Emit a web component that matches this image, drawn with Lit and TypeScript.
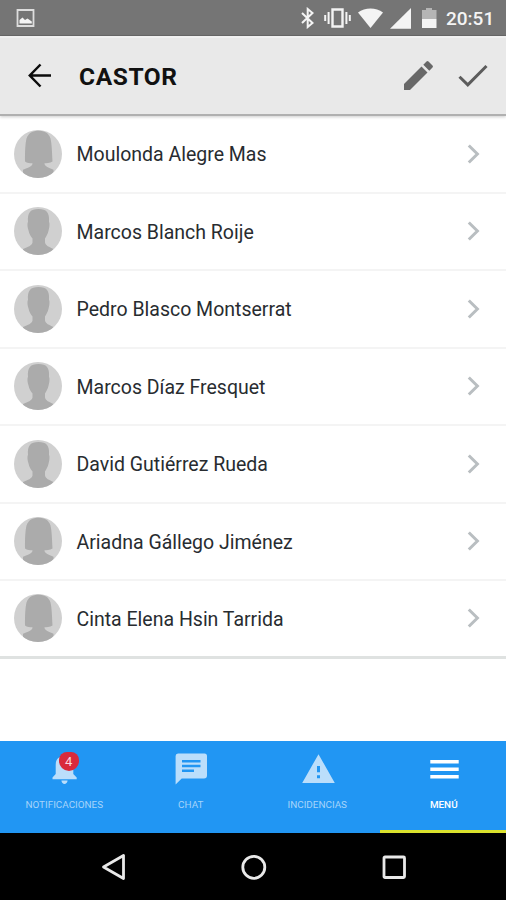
import { LitElement, html, css, svg } from "lit";
import { customElement, property } from "lit/decorators.js";
import { classMap } from "lit/directives/class-map.js";

interface Student {
  name: string;
  kind: "woman" | "man";
}

const students: Student[] = [
  { name: "Moulonda Alegre Mas", kind: "woman" },
  { name: "Marcos Blanch Roije", kind: "man" },
  { name: "Pedro Blasco Montserrat", kind: "man" },
  { name: "Marcos Díaz Fresquet", kind: "man" },
  { name: "David Gutiérrez Rueda", kind: "man" },
  { name: "Ariadna Gállego Jiménez", kind: "woman" },
  { name: "Cinta Elena Hsin Tarrida", kind: "woman" },
];

@customElement("student-avatar")
export class StudentAvatar extends LitElement {
  @property() kind: "woman" | "man" = "woman";

  static styles = css`
    :host { display: block; width: 48px; height: 48px; border-radius: 50%; overflow: hidden; background: #d0d0d0; }
    .figure { display: block; fill: #ababab; }
  `;

  render() {
    const woman = svg`<path d="M11 31.500C11 22 11.200 14 12.500 8.500C14.500 3 18.500 .8 24.500 .8S34.500 3 36.500 8.500C37.800 14 38 22 38.500 31.500C36 33 32 33.300 30.500 33.300C30.500 36 33 37 39.500 39.800V48H9V39.800C16 37 18.500 36 18.500 33.300C16 33.300 13 33 11 31.500Z"/>`;
    const man = svg`<path d="M14 15C13.200 5.500 16.500 2 24.500 2S35.800 5.500 35 15C35.800 16 35.600 20 34.700 23C34 27 32 29.500 31 31.500V35.500C31.500 38.500 35 40 39.500 42V48H9V42C14 40 18 38.500 18.500 35.500V31.500C17 29.500 15 27 14.400 23C13.400 20 13.200 16 14 15Z"/>`;
    return html`<svg class="figure" width="48" height="48" viewBox="0 0 48 48">${this.kind === "woman" ? woman : man}</svg>`;
  }
}

@customElement("student-row")
export class StudentRow extends LitElement {
  @property({ attribute: false }) student!: Student;

  static styles = css`
    :host { display: flex; align-items: center; box-sizing: border-box; padding: 0 25px 0 14px; border-bottom: 2px solid #f4f4f4; }
    :host(:last-child) { border-bottom: 3px solid #dfe2e1; }
    .name { flex: 1; margin-left: 14.500px; font-size: 19.500px; line-height: 24px; color: #282c30; white-space: nowrap; padding-top: 3px; }
    .chevron { display: block; fill: none; stroke: #b9bec1; stroke-width: 3; }
  `;

  render() {
    return html`
      <student-avatar .kind=${this.student.kind}></student-avatar>
      <span class="name">${this.student.name}</span>
      <svg class="chevron" width="15" height="22" viewBox="0 0 15 22"><path d="M2.800 2.500L11.400 11L2.800 19.500"/></svg>
    `;
  }
}

const tabs = [
  {
    label: "NOTIFICACIONES", active: false, badge: "4",
    icon: svg`<path d="M3.500 27.300V25.500L6.700 22V13C6.700 7.500 9.500 5 13.500 4V2.500C13.500 .5 17.500 .5 17.500 2.500V4C21.500 5 24.300 7.500 24.300 13V22L27.700 25.500V27.300ZM12.400 28.500H18.600C18.200 33 12.800 33 12.400 28.500Z"/>`,
  },
  {
    label: "CHAT", active: false, badge: "",
    icon: svg`<path fill-rule="evenodd" d="M3 1.500H29.500Q32 1.500 32 4V23.500Q32 26.500 29 26.500H6.700L.6 32.600V4Q.6 1.500 3 1.500ZM7 8V10.400H25.500V8ZM7 12.800V15.200H25.500V12.800ZM7 17.600V20H19V17.600Z"/>`,
  },
  {
    label: "INCIDENCIAS", active: false, badge: "",
    icon: svg`<path fill-rule="evenodd" d="M16.500 2.200L32.800 31H.2ZM15 14V20.200H18V14ZM15 23.200V26.200H18V23.200Z"/>`,
  },
  {
    label: "MENÚ", active: true, badge: "",
    icon: svg`<path d="M2.300 8H30.700V11.500H2.300ZM2.300 15.500H30.700V19H2.300ZM2.300 23H30.700V26.500H2.300Z"/>`,
  },
];

@customElement("app-root")
export class AppRoot extends LitElement {
  static styles = css`
    :host { display: flex; flex-direction: column; width: 506px; height: 900px; overflow: hidden; background: #fff; font-family: Roboto, "Noto Sans", sans-serif; }
    svg { display: block; flex: none; }
    .status { flex: none; display: flex; align-items: center; height: 36px; box-sizing: border-box; padding: 0 12px 0 16px; background: #757575; border-bottom: 1px solid #696969; color: #f4f4f4; fill: #f4f4f4; }
    .picture { margin-right: auto; }
    .clock { font-size: 19px; font-weight: 500; line-height: 24px; width: 48px; margin-left: 9px; white-space: nowrap; padding-top: 2px; }
    .header { flex: none; display: flex; align-items: center; height: 80px; box-sizing: border-box; padding: 0 18px 0 27px; background: #e9e9e9; border-top: 2px solid #f0f0f0; border-bottom: 2px solid #b0b0b0; box-shadow: 0 1px 3px #0003; z-index: 1; }
    .back { fill: none; stroke: #0c0c0c; stroke-width: 2.500; }
    .title { flex: 1; margin: 0 0 0 27px; font-size: 24.500px; font-weight: 700; letter-spacing: .6px; line-height: 30px; color: #111; padding-top: 1px; }
    .edit { fill: #686868; margin: 0 24px 2px 0; }
    .done { fill: none; stroke: #5c5c5c; stroke-width: 3; }
    .list { flex: none; display: grid; grid-template-rows: repeat(7, 1fr); height: 542.500px; }
    .spacer { flex: 1; }
    .tabs { flex: none; display: grid; grid-template-columns: repeat(4, 1fr); height: 92px; background: #2196f3; }
    .tab { display: flex; flex-direction: column; align-items: center; box-sizing: border-box; padding: 11px 0 0 2px; color: #a6d4fa; fill: #bbdefb; }
    .tab.active { color: #fff; fill: #fff; border-bottom: 3px solid #dbe22d; font-weight: 500; }
    .icon { position: relative; margin-left: 2px; }
    .badge { position: absolute; left: 10px; top: 0; width: 20px; height: 19px; overflow: hidden; border-radius: 8px 8px 10px 10px; background: #d92a3c; color: #fbd5df; font-size: 13px; line-height: 20px; text-align: center; }
    .label { margin-top: 13px; font-size: 9.900px; line-height: 14px; white-space: nowrap; }
    .nav { flex: none; display: flex; align-items: center; justify-content: space-between; height: 67px; padding: 0 99px 0 100px; background: #000; fill: none; stroke: #e9e9e9; stroke-width: 2.800; }
  `;

  render() {
    return html`
      <div class="status">
        <svg class="picture" width="19" height="20" viewBox="0 0 19 20"><path fill="none" stroke="#ddd" stroke-width="1.800" d="M1.500 2H17.500V18H1.500Z"/><path d="M3.500 15.500V12L6.500 9.500L9 12L11.500 10.500L15.800 13.500V15.500Z"/></svg>
        <svg width="137" height="22" viewBox="0 0 137 22">
          <path fill="none" stroke="#f4f4f4" stroke-width="2" d="M2 6L12.500 16L7.700 20V2L12.500 6L2 16"/>
          <path fill="none" stroke="#f4f4f4" stroke-width="2.400" d="M32.500 2.500H42.500V19.500H32.500Z"/>
          <path d="M27.600 5H29.600V17H27.600ZM24.200 8H26.200V14H24.200ZM45.400 5H47.400V17H45.400ZM48.800 8H50.800V14H48.800Z"/>
          <path d="M58 5.500C65 .3 76 .3 83 5.500L70.500 21Z"/>
          <path d="M111 1V21.700H90Z"/>
          <path fill="#b5b5b5" d="M122 3H126V1H132V3H136.500V12H122Z"/>
          <path d="M122 12H136.500V21H122Z"/>
        </svg>
        <span class="clock">20:51</span>
      </div>
      <div class="header">
        <svg class="back" width="25" height="26" viewBox="0 0 25 26"><path d="M24 12.500H3M13.500 1.500L2.800 12.500L13.500 23.500"/></svg>
        <h1 class="title">CASTOR</h1>
        <svg class="edit" width="31" height="31" viewBox="0 0 31 31"><path d="M1 24L18.500 6.500L24.500 12.500L7 30H1ZM20.300 4.700L23.500 1.500Q24.500 .5 25.500 1.500L29.500 5.500Q30.500 6.500 29.500 7.500L26.300 10.700Z"/></svg>
        <svg class="done" width="30" height="24" viewBox="0 0 30 24"><path d="M1.500 12.700L9.800 20.800L28.500 2"/></svg>
      </div>
      <div class="list">${students.map((s) => html`<student-row .student=${s}></student-row>`)}</div>
      <div class="spacer"></div>
      <div class="tabs">
        ${tabs.map((t) => html`
          <div class=${classMap({ tab: true, active: t.active })}>
            <div class="icon">
              <svg width="33" height="33" viewBox="0 0 33 33">${t.icon}</svg>
              ${t.badge ? html`<span class="badge">${t.badge}</span>` : ""}
            </div>
            <span class="label">${t.label}</span>
          </div>
        `)}
      </div>
      <div class="nav">
        <svg width="27" height="28" viewBox="0 0 27 28"><path stroke-linejoin="round" d="M3.500 14L23.500 2.500V25.500Z"/></svg>
        <svg width="26" height="26" viewBox="0 0 26 26"><circle cx="12.800" cy="13.300" r="11"/></svg>
        <svg width="26" height="26" viewBox="0 0 26 26"><rect x="3" y="3" width="20.500" height="20.500" rx="1"/></svg>
      </div>
    `;
  }
}
